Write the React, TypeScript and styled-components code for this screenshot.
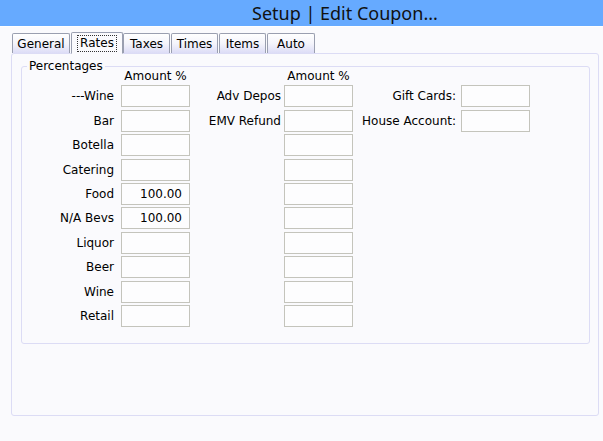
import React from 'react';
import styled, { createGlobalStyle } from 'styled-components';

const GlobalStyle = createGlobalStyle`
  html, body {
    margin: 0;
    padding: 0;
    background: #fafafd;
  }
  body {
    font-family: Tahoma, "DejaVu Sans", "Liberation Sans", sans-serif;
    font-size: 11px;
    color: #000;
  }
`;

const Window = styled.div`
  width: 603px;
  height: 441px;
  display: flex;
  flex-direction: column;
  background: #fafafd;
`;

const TitleBar = styled.div`
  height: 27px;
  background: #66aaff;
  border-bottom: 1px solid #ffffff;
  display: flex;
  align-items: center;
  padding-left: 252px;
  font-family: "Noto Sans", "Open Sans", sans-serif;
  font-size: 18px;
  color: #111;
  box-sizing: border-box;
`;

const Body = styled.div`
  padding: 4px 5px 0 11px;
  display: flex;
  flex-direction: column;
`;

const TabRow = styled.div`
  display: flex;
  align-items: flex-end;
  height: 22px;
  padding-left: 1px;
  position: relative;
  z-index: 1;
`;

const Tab = styled.div<{ $active?: boolean; $w: number }>`
  width: ${(p) => p.$w}px;
  height: ${(p) => (p.$active ? 22 : 20)}px;
  box-sizing: border-box;
  border: 1px solid #9a9fb0;
  border-bottom: ${(p) => (p.$active ? '1px solid #fafafd' : 'none')};
  border-radius: 2px 2px 0 0;
  background: ${(p) =>
    p.$active ? '#fafafd' : 'linear-gradient(#ffffff 0%, #f4f4fb 50%, #dcdcf6 100%)'};
  display: flex;
  align-items: center;
  justify-content: center;
  padding-top: 1px;
  font-size: 12px;
  margin-right: ${(p) => (p.$active ? 0 : 1)}px;
  margin-bottom: ${(p) => (p.$active ? -1 : 0)}px;
`;

const TabLabel = styled.span<{ $focus?: boolean }>`
  padding: 0 2px;
  outline: ${(p) => (p.$focus ? '1px dotted #333' : 'none')};
  outline-offset: 0;
  line-height: 15px;
`;

const Panel = styled.div`
  height: 363px;
  width: 588px;
  box-sizing: border-box;
  border: 1px solid #dcdcf5;
  border-radius: 3px;
  padding: 5px 8px 0 9px;
`;

const Group = styled.fieldset`
  margin: 0;
  padding: 0 0 16px 0;
  border: 1px solid #dcdcf5;
  border-radius: 3px;
  min-width: 0;
`;

const Legend = styled.legend`
  margin-left: 5px;
  padding: 0 2px;
  font-size: 12px;
`;

const Grid = styled.div`
  display: grid;
  grid-template-columns: 99px 69px 94px 69px 108px 69px;
  grid-auto-rows: 22px;
  row-gap: 2.4px;
  align-items: center;
  margin-top: -12px;
`;

const Header = styled.div`
  align-self: end;
  text-align: center;
  font-size: 12px;
  height: 14px;
  line-height: 14px;
`;

const Label = styled.div<{ $pad: number }>`
  text-align: right;
  padding-right: ${(p) => p.$pad}px;
  font-size: 12px;
  white-space: nowrap;
`;

const Field = styled.div`
  height: 22px;
  box-sizing: border-box;
  border: 1px solid #c4c4bc;
  background: #fdfdfe;
  font-size: 12px;
  text-align: right;
  padding: 0 7px;
  line-height: 20px;
`;

const Empty = styled.div``;

const tabs = [
  { name: 'General', w: 58 },
  { name: 'Rates', w: 52 },
  { name: 'Taxes', w: 47 },
  { name: 'Times', w: 47 },
  { name: 'Items', w: 47 },
  { name: 'Auto', w: 48 },
];

const rows: [string, string, string, string][] = [
  ['---Wine', '', 'Adv Depos', ''],
  ['Bar', '', 'EMV Refund', ''],
  ['Botella', '', '', ''],
  ['Catering', '', '', ''],
  ['Food', '100.00', '', ''],
  ['N/A Bevs', '100.00', '', ''],
  ['Liquor', '', '', ''],
  ['Beer', '', '', ''],
  ['Wine', '', '', ''],
  ['Retail', '', '', ''],
];

const extra = ['Gift Cards:', 'House Account:'];

export default function App() {
  return (
    <>
      <GlobalStyle />
      <Window>
        <TitleBar>Setup | Edit Coupon...</TitleBar>
        <Body>
          <TabRow>
            {tabs.map((t) => (
              <Tab key={t.name} $w={t.w} $active={t.name === 'Rates'}>
                <TabLabel $focus={t.name === 'Rates'}>{t.name}</TabLabel>
              </Tab>
            ))}
          </TabRow>
          <Panel>
            <Group>
              <Legend>Percentages</Legend>
              <Grid>
                <Empty />
                <Header>Amount %</Header>
                <Empty />
                <Header>Amount %</Header>
                <Empty />
                <Empty />
                {rows.map((r, i) => (
                  <React.Fragment key={i}>
                    <Label $pad={7}>{r[0]}</Label>
                    <Field>{r[1]}</Field>
                    <Label $pad={3}>{r[2]}</Label>
                    <Field>{r[3]}</Field>
                    {i < extra.length ? (
                      <>
                        <Label $pad={5}>{extra[i]}</Label>
                        <Field />
                      </>
                    ) : (
                      <>
                        <Empty />
                        <Empty />
                      </>
                    )}
                  </React.Fragment>
                ))}
              </Grid>
            </Group>
          </Panel>
        </Body>
      </Window>
    </>
  );
}
